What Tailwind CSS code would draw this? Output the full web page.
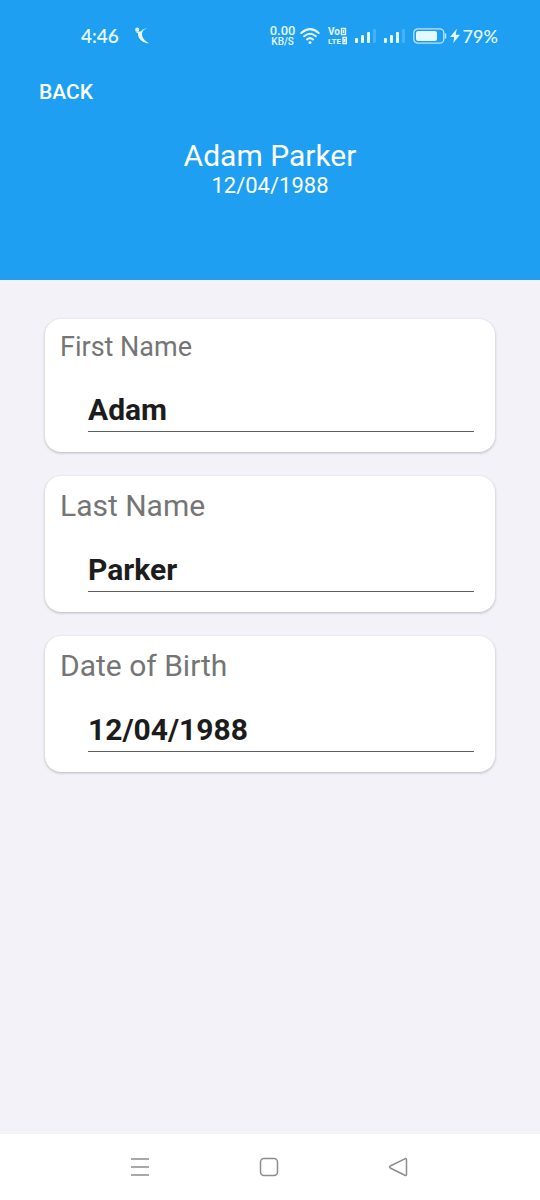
<!DOCTYPE html>
<html lang="en">
<head>
<meta charset="utf-8">
<meta name="viewport" content="width=device-width, initial-scale=1">
<title>Adam Parker</title>
<script src="https://cdn.jsdelivr.net/npm/@tailwindcss/browser@4"></script>
</head>
<body class="flex min-h-screen flex-col bg-[#f2f2f8] font-['Roboto',sans-serif]">
  <header class="bg-[#1e9ff2] pb-20 text-white">
    <div class="flex h-18 items-center justify-between pr-[42px] pl-[81px] text-[#e4f8ff]">
      <div class="flex items-center gap-4">
        <span class="font-['Lato',sans-serif] text-[19px] leading-6 font-semibold">4:46</span>
        <svg class="h-[18px] w-[15px]" viewBox="0 0 15 18" fill="currentColor" aria-hidden="true">
          <circle cx="2.200" cy="2.600" r="2"/>
          <path d="M12.500 1.200C9 2 7.300 3.800 7 6.800C6.900 10.500 9.500 14 14 16.300C9.500 16.300 5 13.500 3.600 10C3 8.300 3 7.200 3.100 6.300L0 4.800L3 4.300C4.600 4.800 5.300 4.700 6.300 3.900C8 2.300 9.800 1.300 12.500 1.200Z"/>
        </svg>
      </div>
      <div class="flex items-center">
        <div class="flex w-7 flex-col items-center text-center font-medium">
          <span class="text-[13px] leading-[12px]">0.00</span>
          <span class="text-[10px] leading-[10px]">KB/S</span>
        </div>
        <svg class="ml-[3px] h-[18px] w-[20px]" viewBox="0 0 20 18" fill="none" stroke="currentColor" stroke-width="2" stroke-linecap="round" aria-hidden="true">
          <path d="M1.300 6Q10-1.800 18.700 6M4.200 9.300Q10 4.100 15.800 9.300M7 12.400Q10 9.900 13 12.400"/>
          <circle cx="10" cy="15.600" r="1.500" fill="currentColor" stroke="none"/>
        </svg>
        <svg class="ml-2 h-[18px] w-[19px]" viewBox="0 0 19 18" aria-label="VoLTE">
          <g font-family="Liberation Sans Narrow, Roboto, sans-serif" font-weight="700" fill="currentColor">
            <text x="0" y="8" font-size="10">Vo</text>
            <text x="0" y="17" font-size="8">LTE</text>
          </g>
          <path d="M13.500 1.500H17.500V7.500H13.500ZM15.500 3V6M15 10.500H18.300V16.500H15ZM16.600 12V15" fill="none" stroke="currentColor" stroke-width="1.400"/>
        </svg>
        <svg class="ml-2 h-4 w-[21px]" viewBox="0 0 21 16" fill="currentColor" aria-hidden="true">
          <rect x="0" y="10" width="3" height="5" rx="1"/><rect x="6" y="7" width="3" height="8" rx="1"/><rect x="12" y="4" width="3" height="11" rx="1"/><rect x="18" y="1" width="3" height="14" rx="1" opacity=".2"/>
        </svg>
        <svg class="ml-2 h-4 w-[21px]" viewBox="0 0 21 16" fill="currentColor" aria-hidden="true">
          <rect x="0" y="10" width="3" height="5" rx="1"/><rect x="6" y="7" width="3" height="8" rx="1"/><rect x="12" y="4" width="3" height="11" rx="1"/><rect x="18" y="1" width="3" height="14" rx="1" opacity=".2"/>
        </svg>
        <svg class="ml-2 h-4 w-[34px]" viewBox="0 0 34 16" fill="none" aria-hidden="true">
          <rect x=".8" y=".8" width="30" height="14.400" rx="4" stroke="currentColor" stroke-width="1.300" opacity=".8"/>
          <rect x="3" y="3" width="21" height="10" rx="2" fill="currentColor"/>
          <path d="M32.500 6V10" stroke="currentColor" stroke-width="1.500" stroke-linecap="round" opacity=".8"/>
        </svg>
        <svg class="ml-[3px] h-4 w-[10px]" viewBox="0 0 10 16" fill="currentColor" aria-hidden="true"><path d="M6.800 .8L0 9H4.200L3.200 15.200L10 6.800H5.700Z"/></svg>
        <span class="ml-[3px] font-['Lato',sans-serif] text-[18px] leading-6 font-medium">79%</span>
      </div>
    </div>
    <button type="button" class="ml-[39px] block h-10 text-[21px] leading-10 font-medium">BACK</button>
    <div class="pt-7 text-center">
      <h1 class="text-[30px] leading-8">Adam Parker</h1>
      <p class="text-[22px] leading-7">12/04/1988</p>
    </div>
  </header>

  <main class="flex-1 px-[45px] pt-[39px]">
    <form class="flex flex-col gap-6">
      <div class="rounded-2xl bg-white pt-3 pr-[21px] pb-5 pl-[15px] shadow-[0_1px_3px_rgba(0,0,0,0.25)]">
        <label for="first" class="block text-[27px] leading-8 text-[#757575]">First Name</label>
        <input id="first" type="text" value="Adam" class="ml-7 block h-[69px] w-[calc(100%-28px)] border-b border-[#5e5e5e] pt-6 text-[30px] leading-9 font-bold text-[#1c1c1c] outline-none">
      </div>
      <div class="rounded-2xl bg-white pt-3 pr-[21px] pb-5 pl-[15px] shadow-[0_1px_3px_rgba(0,0,0,0.25)]">
        <label for="last" class="block text-[30px] leading-9 text-[#757575]">Last Name</label>
        <input id="last" type="text" value="Parker" class="ml-7 block h-[68px] w-[calc(100%-28px)] border-b border-[#5e5e5e] pt-6 text-[30px] leading-9 font-bold text-[#1c1c1c] outline-none">
      </div>
      <div class="rounded-2xl bg-white pt-3 pr-[21px] pb-5 pl-[15px] shadow-[0_1px_3px_rgba(0,0,0,0.25)]">
        <label for="dob" class="block text-[30px] leading-9 text-[#757575]">Date of Birth</label>
        <input id="dob" type="text" value="12/04/1988" class="ml-7 block h-[68px] w-[calc(100%-28px)] border-b border-[#5e5e5e] pt-6 text-[30px] leading-9 font-bold text-[#1c1c1c] outline-none">
      </div>
    </form>
  </main>

  <nav class="flex h-[66px] items-center justify-center gap-[109px] bg-white pr-0.5 text-[#8c8c8c]" aria-label="System navigation">
    <button type="button" aria-label="Recent apps"><svg class="size-5" viewBox="0 0 20 20" fill="none" stroke="currentColor" stroke-width="1.500"><path d="M1 2H19M1 10H19M1 18H19"/></svg></button>
    <button type="button" aria-label="Home"><svg class="size-5" viewBox="0 0 20 20" fill="none" stroke="currentColor" stroke-width="1.500"><rect x="1.500" y="1.500" width="17" height="17" rx="3.500"/></svg></button>
    <button type="button" aria-label="Back"><svg class="size-5" viewBox="0 0 20 20" fill="none" stroke="currentColor" stroke-width="1.500" stroke-linejoin="round"><path d="M16.800 1.800Q18.500 1 18.500 2.800V17.200Q18.500 19 16.800 18.200L2.200 11Q.8 10 2.200 9Z"/></svg></button>
  </nav>
</body>
</html>
